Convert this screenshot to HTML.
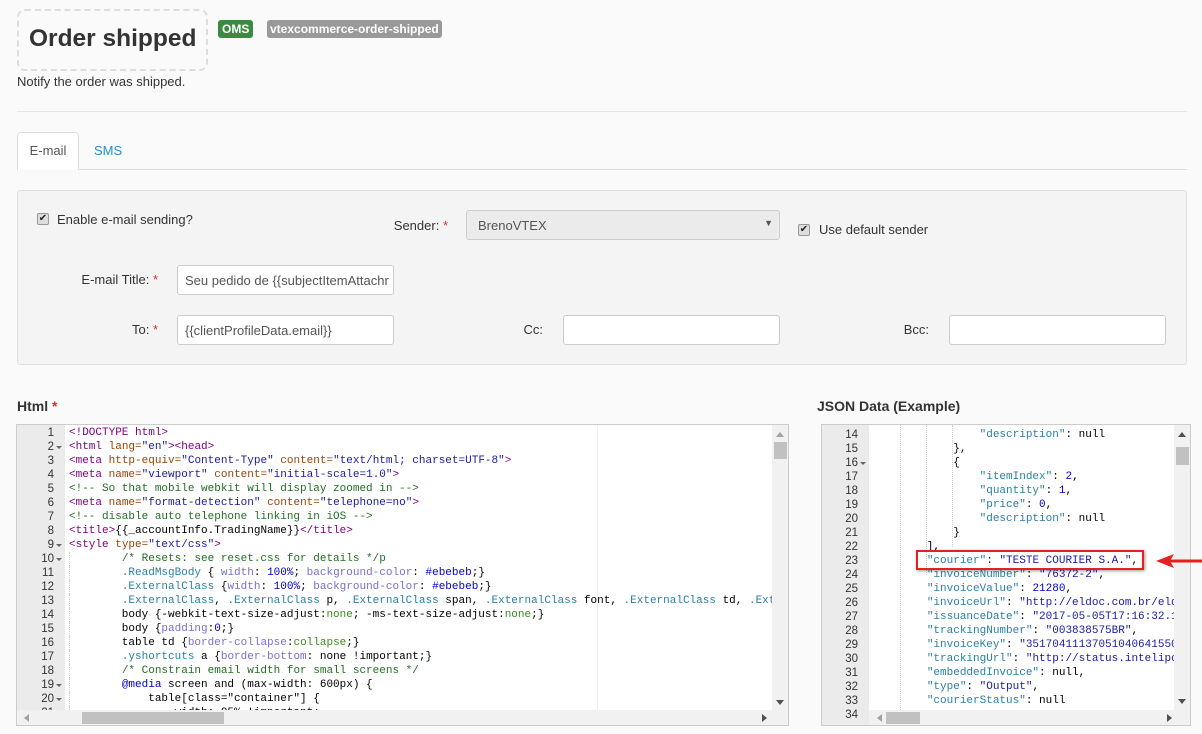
<!DOCTYPE html>
<html><head><meta charset="utf-8"><style>
*{box-sizing:border-box;margin:0;padding:0}
body{width:1202px;height:734px;overflow:hidden;background:#fafafa;font-family:"Liberation Sans",Arial,sans-serif;color:#333;position:relative}
.a{position:absolute}
.lbl{font-size:13px;color:#333;text-align:right}
.req{color:#d9302c}
.inp{position:absolute;background:#fff;border:1px solid #ccc;border-radius:3px;height:30px;font-size:13px;padding:7px 7px;color:#555;white-space:nowrap;overflow:hidden}
.cb{position:absolute;width:12px;height:12px;border:1px solid #999;border-radius:2px;background:#ddd;font-size:10px;line-height:10px;text-align:center;color:#222}
.ed{position:absolute;background:#fff;border:1px solid #ccc;overflow:hidden;font-family:"Liberation Mono",monospace;font-size:11px}
.gut{position:absolute;left:0;top:0;bottom:0;background:#ebebeb}
.ln{position:absolute;left:0;height:14px;line-height:14px;text-align:right;color:#333;font-size:11.5px;font-family:"Liberation Sans",sans-serif}
.cl{position:absolute;white-space:pre;height:14px;line-height:14px;color:#000}
.t{color:#800080}.at{color:#994409}.s{color:#1a1aa6}.c{color:#236e24}.p{color:#7a6fd0}.n{color:#0000cd}.k{color:#2a7fa8}.g{color:#3d8a1a}
.sb{position:absolute;background:#f1f1f1}
</style></head><body>
<div class="a" style="left:17px;top:9px;width:191px;height:62px;border:2px dashed #ddd;border-radius:8px"></div>
<div class="a" style="left:29px;top:25px;font-size:24.5px;font-weight:bold;color:#333">Order shipped</div>
<div class="a" style="left:218px;top:20px;height:18px;padding:0 4px;background:#3c8a3f;color:#fff;font-size:12px;font-weight:bold;line-height:18px;border-radius:3px">OMS</div>
<div class="a" style="left:267px;top:20px;height:18px;padding:0 3px;background:#999;color:#fff;font-size:12px;font-weight:bold;line-height:18px;border-radius:3px">vtexcommerce-order-shipped</div>
<div class="a" style="left:17px;top:74px;font-size:13px;color:#333">Notify the order was shipped.</div>
<div class="a" style="left:17px;top:111px;width:1170px;height:1px;background:#e5e5e5"></div>
<div class="a" style="left:17px;top:169px;width:1170px;height:1px;background:#ddd"></div>
<div class="a" style="left:17px;top:132px;width:62px;height:38px;background:#fff;border:1px solid #ddd;border-bottom:none;border-radius:4px 4px 0 0;font-size:13px;color:#555;text-align:center;line-height:36px">E-mail</div>
<div class="a" style="left:94px;top:143px;font-size:13px;color:#1e8fd6">SMS</div>

<div class="a" style="left:17px;top:190px;width:1170px;height:175px;background:#f4f4f4;border:1px solid #e0e0e0;border-radius:3px"></div>
<div class="cb" style="left:37px;top:213px">✔</div>
<div class="a" style="left:57px;top:212px;font-size:13px">Enable e-mail sending?</div>
<div class="a lbl" style="left:360px;top:218px;width:88px">Sender: <span class="req">*</span></div>
<div class="inp" style="left:466px;top:210px;width:314px;height:30px;background:#ebebeb;border-color:#ccc;padding-left:11px">BrenoVTEX<span style="position:absolute;right:6px;top:7px;font-size:9px;color:#555">▼</span></div>
<div class="cb" style="left:798px;top:224px">✔</div>
<div class="a" style="left:819px;top:222px;font-size:13px">Use default sender</div>
<div class="a lbl" style="left:40px;top:272px;width:118px">E-mail Title: <span class="req">*</span></div>
<div class="inp" style="left:177px;top:265px;width:217px">Seu pedido de {{subjectItemAttachr</div>
<div class="a lbl" style="left:60px;top:322px;width:98px">To: <span class="req">*</span></div>
<div class="inp" style="left:177px;top:315px;width:217px">{{clientProfileData.email}}</div>
<div class="a lbl" style="left:490px;top:322px;width:53px">Cc:</div>
<div class="inp" style="left:563px;top:315px;width:217px"></div>
<div class="a lbl" style="left:880px;top:322px;width:49px">Bcc:</div>
<div class="inp" style="left:949px;top:315px;width:217px"></div>

<div class="a" style="left:17px;top:398px;font-size:14px;font-weight:bold">Html <span class="req">*</span></div>
<div class="a" style="left:817px;top:398px;font-size:14px;font-weight:bold">JSON Data (Example)</div>

<div class="ed" style="left:16px;top:424px;width:773px;height:302px">
<div class="gut" style="width:48px"></div>
<div class="a" style="left:580px;top:0;bottom:0;width:1px;background:#eee"></div>
<div id="L"></div>
<div class="sb" style="left:755px;top:0;width:17px;height:285px"></div>
<div class="a" style="left:759px;top:7px;border:4px solid transparent;border-bottom:5px solid #a3a3a3;border-top:none"></div>
<div class="a" style="left:757px;top:17px;width:13px;height:17px;background:#c1c1c1"></div>
<div class="a" style="left:759px;top:275px;border:4px solid transparent;border-top:5px solid #505050;border-bottom:none"></div>
<div class="sb" style="left:0;top:285px;width:772px;height:17px"></div>
<div class="a" style="left:65px;top:287px;width:142px;height:12px;background:#c1c1c1"></div>
<div class="a" style="left:7px;top:289px;border:4px solid transparent;border-right:5px solid #a3a3a3;border-left:none"></div>
<div class="a" style="left:745px;top:289px;border:4px solid transparent;border-left:5px solid #505050;border-right:none"></div>
</div>

<div class="ed" style="left:821px;top:424px;width:370px;height:302px">
<div class="gut" style="width:47px"></div>
<div id="R"></div>
<div class="sb" style="left:352px;top:0;width:17px;height:285px"></div>
<div class="a" style="left:356px;top:7px;border:4px solid transparent;border-bottom:5px solid #505050;border-top:none"></div>
<div class="a" style="left:354px;top:22px;width:13px;height:18px;background:#c1c1c1"></div>
<div class="a" style="left:356px;top:274px;border:4px solid transparent;border-top:5px solid #505050;border-bottom:none"></div>
<div class="sb" style="left:47px;top:285px;width:322px;height:17px"></div>
<div class="a" style="left:64px;top:287px;width:34px;height:12px;background:#c1c1c1"></div>
<div class="a" style="left:55px;top:289px;border:4px solid transparent;border-right:5px solid #a3a3a3;border-left:none"></div>
<div class="a" style="left:345px;top:289px;border:4px solid transparent;border-left:5px solid #505050;border-right:none"></div>
</div>
<div class="a" style="left:916px;top:550px;width:228px;height:20px;border:2px solid #e52020;box-shadow:1px 1px 3px rgba(0,0,0,.4)"></div>
<svg class="a" style="left:1150px;top:550px" width="52" height="22"><path d="M52 11H18" stroke="#e52020" stroke-width="3"/><path d="M6 11L24 4L20 11L24 18Z" fill="#e52020"/></svg>

<script>
var L=[
'<span class="t">&lt;!DOCTYPE html&gt;</span>',
'<span class="t">&lt;html</span> <span class="at">lang=</span><span class="s">"en"</span><span class="t">&gt;&lt;head&gt;</span>',
'<span class="t">&lt;meta</span> <span class="at">http-equiv=</span><span class="s">"Content-Type"</span> <span class="at">content=</span><span class="s">"text/html; charset=UTF-8"</span><span class="t">&gt;</span>',
'<span class="t">&lt;meta</span> <span class="at">name=</span><span class="s">"viewport"</span> <span class="at">content=</span><span class="s">"initial-scale=1.0"</span><span class="t">&gt;</span>',
'<span class="c">&lt;!-- So that mobile webkit will display zoomed in --&gt;</span>',
'<span class="t">&lt;meta</span> <span class="at">name=</span><span class="s">"format-detection"</span> <span class="at">content=</span><span class="s">"telephone=no"</span><span class="t">&gt;</span>',
'<span class="c">&lt;!-- disable auto telephone linking in iOS --&gt;</span>',
'<span class="t">&lt;title&gt;</span>{{_accountInfo.TradingName}}<span class="t">&lt;/title&gt;</span>',
'<span class="t">&lt;style</span> <span class="at">type=</span><span class="s">"text/css"</span><span class="t">&gt;</span>',
'        <span class="c">/* Resets: see reset.css for details */p</span>',
'        <span class="k">.ReadMsgBody</span> { <span class="p">width</span>: <span class="n">100%</span>; <span class="p">background-color</span>: <span class="n">#ebebeb</span>;}',
'        <span class="k">.ExternalClass</span> {<span class="p">width</span>: <span class="n">100%</span>; <span class="p">background-color</span>: <span class="n">#ebebeb</span>;}',
'        <span class="k">.ExternalClass</span>, <span class="k">.ExternalClass</span> p, <span class="k">.ExternalClass</span> span, <span class="k">.ExternalClass</span> font, <span class="k">.ExternalClass</span> td, <span class="k">.Ext</span>',
'        body {-webkit-text-size-adjust:<span class="g">none</span>; -ms-text-size-adjust:<span class="g">none</span>;}',
'        body {<span class="p">padding</span>:<span class="n">0</span>;}',
'        table td {<span class="p">border-collapse</span>:<span class="g">collapse</span>;}',
'        <span class="k">.yshortcuts</span> a {<span class="p">border-bottom</span>: none !important;}',
'        <span class="c">/* Constrain email width for small screens */</span>',
'        <span class="n">@media</span> screen and (max-width: 600px) {',
'            table[class="container"] {',
'                width: 95% !important;'];
var h='';for(var i=0;i<L.length;i++){var y=1+i*14;var f=[2,9,10,19,20].indexOf(i+1)>=0;
h+='<div class="ln" style="top:'+y+'px;width:37px">'+(i+1)+'</div>'+(f?'<div class="a" style="left:39px;top:'+(y+6)+'px;border:3px solid transparent;border-top:3px solid #666;border-bottom:none"></div>':'')+'<div class="cl" style="left:52px;top:'+y+'px">'+L[i]+'</div>';}
for(var i=9;i<21;i++){h+='<div class="a" style="left:52px;top:'+(1+i*14)+'px;width:1px;height:14px;border-left:1px dotted #ccc"></div>';}
document.getElementById('L').innerHTML=h;
var R=[
'                <span class="k">"description"</span>: null',
'            },',
'            {',
'                <span class="k">"itemIndex"</span>: <span class="n">2</span>,',
'                <span class="k">"quantity"</span>: <span class="n">1</span>,',
'                <span class="k">"price"</span>: <span class="n">0</span>,',
'                <span class="k">"description"</span>: null',
'            }',
'        ],',
'        <span class="k">"courier"</span>: <span class="s">"TESTE COURIER S.A."</span>,',
'        <span class="k">"invoiceNumber"</span>: <span class="s">"76372-2"</span>,',
'        <span class="k">"invoiceValue"</span>: <span class="n">21280</span>,',
'        <span class="k">"invoiceUrl"</span>: <span class="s">"http://eldoc.com.br/eldoc</span>',
'        <span class="k">"issuanceDate"</span>: <span class="s">"2017-05-05T17:16:32.13</span>',
'        <span class="k">"trackingNumber"</span>: <span class="s">"003838575BR"</span>,',
'        <span class="k">"invoiceKey"</span>: <span class="s">"35170411137051040641550</span>',
'        <span class="k">"trackingUrl"</span>: <span class="s">"http://status.intelipost</span>',
'        <span class="k">"embeddedInvoice"</span>: null,',
'        <span class="k">"type"</span>: <span class="s">"Output"</span>,',
'        <span class="k">"courierStatus"</span>: null',
''];
h='';for(var i=0;i<R.length;i++){var y=3+i*14;
h+='<div class="ln" style="top:'+y+'px;width:36px">'+(i+14)+'</div>'+((i+14)==16?'<div class="a" style="left:38px;top:'+(y+6)+'px;border:3px solid transparent;border-top:3px solid #666;border-bottom:none"></div>':'')+'<div class="cl" style="left:52px;top:'+y+'px">'+R[i]+'</div>';}
[78,104,130].forEach(function(x){h+='<div class="a" style="left:'+x+'px;top:0;height:'+(x==130?122:(x==104?150:285))+'px;border-left:1px dotted #ccc"></div>'});
document.getElementById('R').innerHTML=h;
</script>
</body></html>
